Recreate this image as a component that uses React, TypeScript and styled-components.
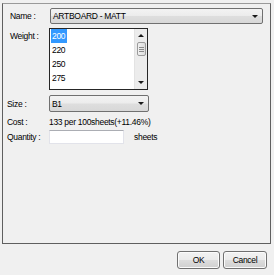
import React from "react";
import styled, {createGlobalStyle} from "styled-components";

const GlobalStyle = createGlobalStyle`
  html, body {
    margin: 0;
    padding: 0;
    background: #f0f0f0;
  }
  body {
    font-family: "Liberation Sans", Arial, sans-serif;
    font-size: 8.5px;
    letter-spacing: -0.3px;
    color: #000;
  }
`;

const Window = styled.div`
  width: 274px;
  height: 275px;
  box-sizing: border-box;
  padding: 3px 3px 0 2px;
  display: flex;
  flex-direction: column;
  background: #f0f0f0;
`;

const Panel = styled.div`
  height: 241px;
  box-sizing: border-box;
  border: 1px solid #5f5f5f;
  border-top-color: #9a9a9a;
`;

const Form = styled.div`
  display: flex;
  flex-direction: column;
  padding: 4px 0 0 4px;
`;

const Row = styled.div<{$top?: number; $align?: string; $h?: number}>`
  display: flex;
  align-items: ${p => p.$align || "center"};
  margin-top: ${p => p.$top || 0}px;
  ${p => p.$h ? `height: ${p.$h}px;` : ""}
`;

const Label = styled.div<{$indent?: number; $pad?: number}>`
  width: 42px;
  box-sizing: border-box;
  padding-left: ${p => p.$indent || 0}px;
  padding-top: ${p => p.$pad || 0}px;
  white-space: nowrap;
  flex-shrink: 0;
`;

const Combo = styled.div<{$w: number; $h: number; $shift?: number}>`
  width: ${p => p.$w}px;
  height: ${p => p.$h}px;
  margin-left: ${p => p.$shift || 0}px;
  box-sizing: border-box;
  border: 1px solid #707070;
  border-radius: 2px;
  background: linear-gradient(#f3f3f3 0%, #ececec 48%, #dedede 52%, #d8d8d8 100%);
  display: flex;
  align-items: center;
  padding: 0 4px 0 2px;
  justify-content: space-between;
`;

const Arrow = styled.span<{$up?: boolean}>`
  width: 0;
  height: 0;
  border-left: 3px solid transparent;
  border-right: 3px solid transparent;
  ${p => p.$up ? "border-bottom: 3px solid #1a1a1a;" : "border-top: 3px solid #1a1a1a;"}
`;

const ListBox = styled.div`
  width: 99px;
  height: 62px;
  box-sizing: border-box;
  border: 1px solid #262626;
  background: #fff;
  display: flex;
`;

const Items = styled.div`
  flex: 1;
  display: flex;
  flex-direction: column;
  padding-left: 1px;
`;

const Item = styled.div<{$sel?: boolean}>`
  height: 14px;
  line-height: 14px;
  align-self: flex-start;
  padding: 0 2px 0 1px;
  background: ${p => p.$sel ? "#3399ff" : "transparent"};
  color: ${p => p.$sel ? "#fff" : "#000"};
`;

const ScrollBar = styled.div`
  width: 12px;
  background: #ececec;
  border-left: 1px solid #e3e3e3;
  display: flex;
  flex-direction: column;
  align-items: center;
`;

const ScrollBtn = styled.div`
  height: 13px;
  width: 100%;
  display: flex;
  align-items: center;
  justify-content: center;
`;

const Thumb = styled.div`
  width: 9px;
  height: 14px;
  box-sizing: border-box;
  border: 1px solid #9b9b9b;
  border-radius: 2px;
  background: linear-gradient(90deg, #f1f1f1, #dcdcdc);
  display: flex;
  flex-direction: column;
  align-items: center;
  justify-content: center;
  gap: 1px;
`;

const Grip = styled.span`
  width: 5px;
  height: 1px;
  background: #8a8a8a;
`;

const Track = styled.div`
  flex: 1;
`;

const Text = styled.span<{$ml?: number}>`
  margin-left: ${p => p.$ml || 0}px;
  white-space: nowrap;
`;

const Input = styled.div`
  width: 75px;
  height: 14px;
  box-sizing: border-box;
  background: #fff;
  border: 1px solid #e2e3ea;
  border-top-color: #abadb3;
`;

const Footer = styled.div`
  display: flex;
  justify-content: flex-end;
  gap: 3px;
  margin-top: 7px;
  padding-right: 4px;
`;

const Button = styled.div<{$w: number}>`
  width: ${p => p.$w}px;
  height: 18px;
  box-sizing: border-box;
  border: 1px solid #707070;
  border-radius: 3px;
  background: linear-gradient(#f2f2f2 0%, #ebebeb 48%, #dddddd 52%, #cfcfcf 100%);
  box-shadow: inset 0 0 0 1px #fbfbfb;
  display: flex;
  align-items: center;
  justify-content: center;
`;

const weights = ["200", "220", "250", "275"];

export default function App() {
    return <>
        <GlobalStyle/>
        <Window>
            <Panel>
                <Form>
                    <Row>
                        <Label $indent={3}>Name :</Label>
                        <Combo $w={213} $h={16} $shift={1}>
                            <span>ARTBOARD - MATT</span>
                            <Arrow/>
                        </Combo>
                    </Row>
                    <Row $top={4} $align="flex-start">
                        <Label $indent={3} $pad={3}>Weight :</Label>
                        <ListBox>
                            <Items>
                                {weights.map((w, i) => <Item key={w} $sel={i === 0}>{w}</Item>)}
                            </Items>
                            <ScrollBar>
                                <ScrollBtn><Arrow $up/></ScrollBtn>
                                <Thumb><Grip/><Grip/><Grip/></Thumb>
                                <Track/>
                                <ScrollBtn><Arrow/></ScrollBtn>
                            </ScrollBar>
                        </ListBox>
                    </Row>
                    <Row $top={5}>
                        <Label>Size :</Label>
                        <Combo $w={100} $h={17}>
                            <span>B1</span>
                            <Arrow/>
                        </Combo>
                    </Row>
                    <Row $top={3} $h={13}>
                        <Label>Cost :</Label>
                        <Text>133 per 100sheets(+11.46%)</Text>
                    </Row>
                    <Row $top={2}>
                        <Label>Quantity :</Label>
                        <Input/>
                        <Text $ml={10}>sheets</Text>
                    </Row>
                </Form>
            </Panel>
            <Footer>
                <Button $w={43}>OK</Button>
                <Button $w={44}>Cancel</Button>
            </Footer>
        </Window>
    </>;
}
